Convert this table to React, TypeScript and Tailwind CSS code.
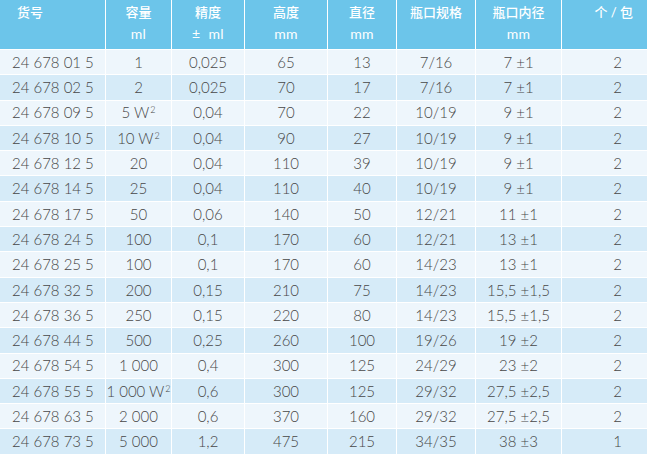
import React from "react";

type Row = [string, React.ReactNode, string, string, string, string, string, string];

const W2 = (n: string) => (
  <>
    {n} W<span className="text-[9px] relative -top-[5px] ml-[1px]">2</span>
  </>
);

const rows: Row[] = [
  ["24 678 01 5", "1", "0,025", "65", "13", "7/16", "7 ±1", "2"],
  ["24 678 02 5", "2", "0,025", "70", "17", "7/16", "7 ±1", "2"],
  ["24 678 09 5", W2("5"), "0,04", "70", "22", "10/19", "9 ±1", "2"],
  ["24 678 10 5", W2("10"), "0,04", "90", "27", "10/19", "9 ±1", "2"],
  ["24 678 12 5", "20", "0,04", "110", "39", "10/19", "9 ±1", "2"],
  ["24 678 14 5", "25", "0,04", "110", "40", "10/19", "9 ±1", "2"],
  ["24 678 17 5", "50", "0,06", "140", "50", "12/21", "11 ±1", "2"],
  ["24 678 24 5", "100", "0,1", "170", "60", "12/21", "13 ±1", "2"],
  ["24 678 25 5", "100", "0,1", "170", "60", "14/23", "13 ±1", "2"],
  ["24 678 32 5", "200", "0,15", "210", "75", "14/23", "15,5 ±1,5", "2"],
  ["24 678 36 5", "250", "0,15", "220", "80", "14/23", "15,5 ±1,5", "2"],
  ["24 678 44 5", "500", "0,25", "260", "100", "19/26", "19 ±2", "2"],
  ["24 678 54 5", "1 000", "0,4", "300", "125", "24/29", "23 ±2", "2"],
  ["24 678 55 5", W2("1 000"), "0,6", "300", "125", "29/32", "27,5 ±2,5", "2"],
  ["24 678 63 5", "2 000", "0,6", "370", "160", "29/32", "27,5 ±2,5", "2"],
  ["24 678 73 5", "5 000", "1,2", "475", "215", "34/35", "38 ±3", "1"],
];

const headers: [string, string][] = [
  ["货号", ""],
  ["容量", "ml"],
  ["精度", "±  ml"],
  ["高度", "mm"],
  ["直径", "mm"],
  ["瓶口规格", ""],
  ["瓶口内径", "mm"],
  ["个 / 包", ""],
];

const cols = "grid grid-cols-[106px_66px_73px_83px_69px_79px_86px_1fr]";

function cellAlign(i: number) {
  if (i === 0) return "text-left pl-[12px]";
  if (i === 7) return "text-center pl-[26px]";
  return "text-center";
}

export default function App() {
  return (
    <div
      className="w-[647px] h-[461px] bg-white overflow-hidden"
      style={{ fontFamily: "Lato, 'Noto Sans CJK SC', sans-serif" }}
    >
      <div className={`${cols} bg-[#6cc5ea] text-white border-b-[1.5px] border-white`}>
        {headers.map(([a, b], i) => (
          <div
            key={i}
            className={`h-[49px] pt-[2px] text-[13px] leading-[21px] font-medium ${
              i < 7 ? "border-r-[1.5px] border-white" : ""
            } ${i === 0 ? "text-left pl-[17px]" : i === 7 ? "text-right pr-[14px]" : "text-center"}`}
          >
            <div>{a}</div>
            <div className="text-[14px] font-normal tracking-wide whitespace-pre">{b}</div>
          </div>
        ))}
      </div>
      {rows.map((r, ri) => (
        <div
          key={ri}
          className={`${cols} h-[25.3px] border-b border-white text-[15px] text-[#474747] font-light ${
            ri % 2 === 0 ? "bg-[#eef6fc]" : "bg-[#d6ebf8]"
          }`}
        >
          {r.map((c, ci) => (
            <div
              key={ci}
              className={`flex items-center whitespace-nowrap ${
                ci === 0 ? "justify-start" : "justify-center"
              } ${cellAlign(ci)} ${ci < 7 ? "border-r border-white" : ""}`}
            >
              <span>{c}</span>
            </div>
          ))}
        </div>
      ))}
    </div>
  );
}
